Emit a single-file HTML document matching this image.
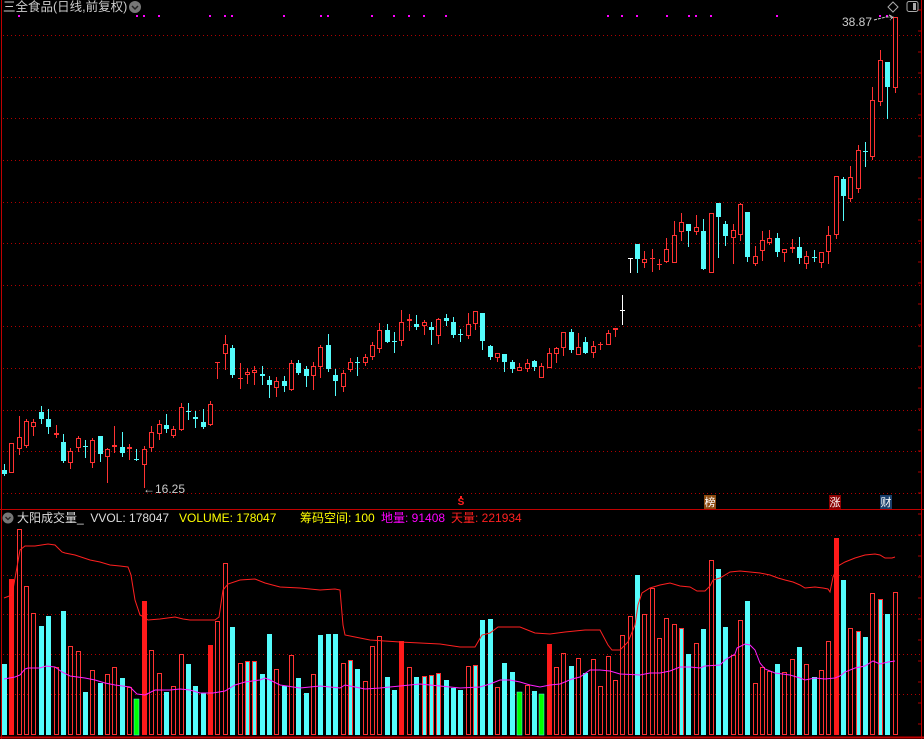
<!DOCTYPE html>
<html><head><meta charset="utf-8"><style>
html,body{margin:0;padding:0;background:#000;width:924px;height:739px;overflow:hidden}
svg{position:absolute;left:0;top:0}
.t{position:absolute;font-family:"Liberation Sans","Noto Sans CJK SC",sans-serif;font-size:12px;white-space:nowrap;line-height:14px}
.box{position:absolute;width:12px;height:14px;font-family:"Noto Sans CJK SC",sans-serif;font-size:11px;line-height:14px;text-align:center;color:#fff}
</style></head><body>
<svg id="s" width="924" height="739" xmlns="http://www.w3.org/2000/svg">
<g id="grid" stroke="#b00000" stroke-width="1" stroke-dasharray="1,3"></g>
<line x1="0" y1="509.5" x2="924" y2="509.5" stroke="#c00000"/>
<line x1="0" y1="737.5" x2="924" y2="737.5" stroke="#c00000" stroke-width="2"/>
<line x1="1.5" y1="0" x2="1.5" y2="739" stroke="#c00000"/>
<line x1="921.5" y1="0" x2="921.5" y2="739" stroke="#c00000"/>
<g id="c"></g>
<g id="v"></g>
<polyline fill="none" stroke="#ff2020" stroke-width="1" points="4,598 12,595 17,567 20,550 25,546 35,546 48,544 55,545 62,552 65,553 75,555 90,560 100,562 110,565 120,566 128,567 131,575 135,600 140,615 144,617 148,620 160,619 175,617 183,619 190,620 215,620 219,617 223,590 228,584 240,580 255,579 265,583 280,587 300,588 320,590 335,589 340,590 343,625 345,635 355,637 370,640 400,642 420,643 440,644 460,647 475,647 482,635 490,633 498,627 520,627 530,631 535,633 550,634 565,632 585,630 600,630 608,645 612,650 620,650 628,642 635,625 638,605 642,593 650,588 660,585 670,583 680,586 690,587 697,591 705,591 710,586 713,580 720,578 730,572 740,571 750,572 760,573 770,575 778,578 785,580 793,582 800,585 805,588 815,587 823,588 828,589 830,592 833,577 838,566 845,562 855,558 865,555 875,554 880,555 885,558 892,558 895,557"/>
<polyline fill="none" stroke="#ff20ff" stroke-width="1" points="4,679 15,677 20,675 25,669 28,668 40,668 46,666 55,667 62,672 70,676 85,678 95,680 105,683 115,685 130,687 137,694 145,695 155,690 170,690 180,689 190,690 200,693 213,693 225,691 235,685 245,682 260,680 265,678 270,680 280,685 300,688 320,686 340,688 345,685 355,687 365,689 380,688 400,686 420,684 440,686 460,688 480,687 490,684 500,680 510,680 520,682 530,685 540,687 550,685 560,684 572,679 580,677 590,670 600,670 610,671 620,674 640,675 650,673 660,673 670,671 680,667 690,667 700,668 705,666 720,665 725,660 735,654 737,648 745,644 750,645 755,650 760,663 765,669 775,673 790,675 800,678 805,680 815,678 825,679 835,678 840,676 845,672 855,668 865,666 873,661 880,664 888,662 895,661"/>
<g id="dots" fill="#ff00ff"></g>
<circle cx="135" cy="7" r="6" fill="#777"/>
<path d="M132 6 L135 9 L138 6" stroke="#222" stroke-width="1.5" fill="none"/>
<circle cx="8" cy="518" r="5.5" fill="#777"/>
<path d="M5.5 517 L8 519.5 L10.5 517" stroke="#222" stroke-width="1.3" fill="none"/>
<path d="M893 2 L898 7 L893 12 L888 7 Z" stroke="#aaa" fill="none"/>
<rect x="907" y="1.5" width="11" height="10" rx="2" stroke="#aaa" fill="none"/>
<rect x="913" y="3" width="3" height="7" fill="#aaa"/>
<path d="M874 20 L886 17 L893 17 M889 15 L893 17 L890 20" stroke="#ccc" fill="none" stroke-dasharray="3,1"/>
<text x="461" y="505" fill="#ff2020" font-family="Liberation Sans" font-size="10" font-weight="bold" text-anchor="middle">S</text>
<line x1="461" y1="496" x2="461" y2="498" stroke="#ff2020" stroke-width="2"/>
</svg>
<div class="t" style="left:3px;top:0px;font-size:12.5px;color:#ccc">三全食品(日线,前复权)</div>
<div class="t" style="left:842px;top:15px;color:#ccc">38.87</div>
<div class="t" style="left:143px;top:482px;color:#ccc">←16.25</div>
<div class="t" style="left:17px;top:511px;color:#ddd">大阳成交量_&nbsp;&nbsp;VVOL: 178047</div>
<div class="t" style="left:179px;top:511px;color:#ffff00">VOLUME: 178047</div>
<div class="t" style="left:300px;top:511px;color:#ffff00">筹码空间: 100</div>
<div class="t" style="left:381px;top:511px;color:#ff00ff">地量: 91408</div>
<div class="t" style="left:451px;top:511px;color:#ff2020">天量: 221934</div>
<div class="box" style="left:704px;top:495px;background:#8b4a10">榜</div>
<div class="box" style="left:829px;top:495px;background:#8b0000">涨</div>
<div class="box" style="left:880px;top:495px;background:#1a3f6b">财</div>
<script>
var NS="http://www.w3.org/2000/svg";
function el(p,t,a){var e=document.createElementNS(NS,t);for(var k in a)e.setAttribute(k,a[k]);p.appendChild(e);return e;}
var g=document.getElementById("grid");
[35,77,118,160,202,243,285,326,368,410,451,493,535,575,614,654,694].forEach(function(y){el(g,"line",{x1:3,y1:y+.5,x2:920,y2:y+.5});});
for(var y=10;y<739;y+=21){el(g,"line",{x1:918,y1:y,x2:921,y2:y,"stroke-dasharray":"none"});}
var C=[["c",470,474,464,476],["r",443,473,443,473],["r",437,449,416,455],["r",421,446,419,448],["r",422,427,419,436],["c",412,419,406,424],["c",419,427,409,434],["r",433,435,425,438],["c",442,461,434,463],["r",451,463,448,469],["r",438,448,436,452],["c",446,447,440,458],["r",440,463,438,468],["c",436,454,436,462],["r",449,457,448,483],["r",445,447,426,453],["c",447,453,432,457],["r",447,449,444,460],["c",459,460,449,461],["r",449,465,446,488],["r",432,448,426,452],["r",424,434,420,440],["c",425,429,414,433],["r",429,436,426,438],["r",407,430,403,431],["c",411,412,403,420],["c",417,419,411,428],["c",422,427,409,429],["r",404,425,401,426],["r",362,363,362,379],["r",344,354,335,370],["c",348,375,345,378],["r",378,379,363,389],["r",372,375,368,384],["r",370,373,366,385],["c",374,376,366,385],["c",380,385,376,398],["r",381,388,377,397],["c",381,386,376,392],["r",363,390,360,391],["c",363,373,360,375],["c",369,376,366,387],["r",366,376,362,390],["r",347,367,345,378],["c",345,369,334,372],["c",375,381,369,396],["r",373,387,370,392],["r",362,370,358,372],["c",362,363,357,376],["r",357,363,354,366],["r",345,357,342,360],["r",330,349,323,353],["c",330,342,324,343],["c",341,342,332,353],["r",322,341,310,346],["r",319,321,314,331],["c",324,327,315,330],["r",322,326,320,335],["c",327,330,322,345],["r",319,336,318,344],["c",318,321,314,326],["c",322,335,317,338],["c",334,335,329,342],["r",324,336,313,339],["r",311,324,311,330],["c",313,341,313,350],["c",346,357,345,360],["r",353,358,353,362],["c",354,362,354,372],["c",362,369,360,373],["r",367,371,363,371],["r",363,369,359,372],["c",361,367,360,371],["r",366,378,363,378],["r",353,368,348,368],["r",348,354,347,363],["r",332,348,332,356],["c",332,350,329,353],["r",347,355,333,355],["c",342,353,337,354],["r",346,353,341,358],["r",344,345,342,350],["r",333,345,330,345],["r",328,330,328,337],["w",310,311,295,325],["w",258,259,258,273],["c",244,259,244,273],["r",259,263,251,268],["r",258,259,249,272],["r",264,265,259,270],["r",249,262,238,263],["r",235,263,221,263],["r",222,232,213,241],["c",224,231,224,247],["r",227,232,215,235],["c",231,269,219,270],["r",213,273,213,273],["c",203,217,203,258],["c",224,236,221,246],["r",230,238,224,264],["r",204,235,203,241],["c",212,257,212,262],["r",256,264,246,266],["r",240,251,231,261],["r",238,243,230,245],["c",238,252,233,257],["r",249,253,249,262],["r",247,249,239,253],["c",247,258,237,264],["r",256,264,251,269],["c",257,258,250,262],["r",252,263,252,268],["r",235,252,226,264],["r",176,235,176,239],["c",179,196,177,221],["r",177,199,166,202],["r",150,189,145,193],["c",151,152,142,167],["r",100,157,87,160],["r",60,102,50,106],["c",62,87,62,119],["r",17,88,17,93]];
var cg=document.getElementById("c");
C.forEach(function(d,i){var x=Math.round(2+i*7.36),cx=x+2.5;var col=d[0]=="c"?"#54fcfc":(d[0]=="w"?"#fff":"#ff3232");
el(cg,"line",{x1:cx,y1:d[3],x2:cx,y2:d[4],stroke:col});
var h=d[2]-d[1];
if(h<=2){el(cg,"rect",{x:x,y:d[1],width:5,height:Math.max(h,1),fill:col});}
else if(d[0]=="r"){el(cg,"rect",{x:x+.5,y:d[1]+.5,width:4,height:h-1,fill:"#000",stroke:col});}
else el(cg,"rect",{x:x,y:d[1],width:5,height:h,fill:col});});
var V=[[664,"c"],[579,"R"],[529,"h"],[586,"h"],[613,"h"],[626,"c"],[616,"c"],[667,"h"],[611,"c"],[646,"h"],[651,"h"],[692,"c"],[670,"h"],[683,"c"],[674,"h"],[667,"h"],[678,"c"],[687,"h"],[699,"g"],[601,"R"],[650,"h"],[673,"h"],[692,"c"],[686,"h"],[654,"h"],[664,"c"],[686,"c"],[693,"c"],[645,"R"],[621,"h"],[563,"h"],[627,"c"],[663,"h"],[661,"x"],[661,"x"],[674,"c"],[634,"c"],[669,"h"],[686,"c"],[655,"h"],[678,"c"],[693,"c"],[674,"h"],[635,"c"],[634,"c"],[634,"c"],[663,"h"],[660,"x"],[669,"c"],[681,"h"],[646,"h"],[636,"h"],[677,"c"],[690,"c"],[641,"R"],[667,"h"],[677,"c"],[676,"x"],[675,"x"],[673,"x"],[680,"c"],[688,"c"],[690,"c"],[666,"h"],[665,"x"],[620,"c"],[619,"c"],[687,"h"],[663,"c"],[672,"c"],[692,"g"],[685,"h"],[691,"c"],[694,"g"],[644,"R"],[667,"h"],[653,"h"],[666,"c"],[658,"h"],[673,"c"],[659,"h"],[686,"h"],[656,"h"],[680,"h"],[635,"h"],[616,"h"],[575,"c"],[614,"h"],[588,"h"],[638,"h"],[618,"h"],[624,"h"],[628,"x"],[654,"c"],[643,"h"],[629,"c"],[560,"h"],[569,"c"],[627,"c"],[655,"h"],[620,"h"],[601,"c"],[683,"h"],[667,"h"],[671,"h"],[664,"c"],[672,"h"],[659,"h"],[647,"c"],[664,"h"],[677,"c"],[670,"h"],[641,"h"],[538,"R"],[580,"c"],[628,"h"],[631,"x"],[637,"c"],[593,"h"],[599,"x"],[614,"c"],[592,"h"]];
var vg=document.getElementById("v"),B=735;
V.forEach(function(d,i){var x=Math.round(2+i*7.36),t=d[0],k=d[1];
if(k=="c")el(vg,"rect",{x:x,y:t,width:5,height:B-t,fill:"#54fcfc"});
else if(k=="g")el(vg,"rect",{x:x,y:t,width:5,height:B-t,fill:"#00ff00",stroke:"#54fcfc","stroke-width":0.5});
else if(k=="R")el(vg,"rect",{x:x,y:t,width:5,height:B-t,fill:"#ff1a1a"});
else if(k=="x"){el(vg,"rect",{x:x,y:t,width:5,height:B-t,fill:"#ff3232"});el(vg,"rect",{x:x+1,y:t+1,width:3,height:B-t-1,fill:"#54fcfc"});}
else el(vg,"rect",{x:x+.5,y:t+.5,width:4,height:B-t-1,fill:"none",stroke:"#ff3232"});});
var dg=document.getElementById("dots");
[19,137,144,159,210,225,232,284,321,328,372,394,409,424,446,608,622,637,667,689,696,711,777,880,887].forEach(function(x){el(dg,"rect",{x:x-1,y:15,width:2,height:2});});
</script>
</body></html>
